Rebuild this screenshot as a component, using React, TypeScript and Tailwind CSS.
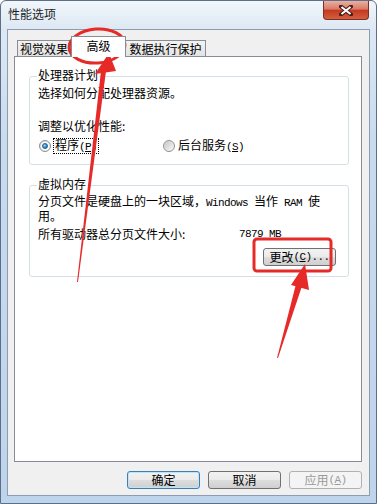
import React from "react";

// latin runs in SimSun are half-width: 11px mono with tight tracking gives the same 6px advance
function Latin({ children }: { children: React.ReactNode }) {
  return (
    <span className="font-['Liberation_Mono',monospace] text-[11px] tracking-[-0.6px]">{children}</span>
  );
}

function Radio({ checked }: { checked?: boolean }) {
  return (
    <span className="flex h-[12px] w-[12px] shrink-0 items-center justify-center rounded-full border border-[#8e8f8f] bg-[linear-gradient(135deg,#d4d4d4,#f8f8f8)]">
      {checked ? (
        <span className="flex h-[8px] w-[8px] items-center justify-center rounded-full bg-white">
          <span className="h-[6px] w-[6px] rounded-full border border-[#1b5a8c] bg-[radial-gradient(circle_at_35%_35%,#9cdcf9,#2b86c6_60%,#135a95)]" />
        </span>
      ) : (
        <span className="h-[8px] w-[8px] rounded-full bg-[linear-gradient(135deg,#c9c9c9,#f4f4f4)]" />
      )}
    </span>
  );
}

function Btn({
  children,
  kind = "normal",
  className = "",
}: {
  children: React.ReactNode;
  kind?: "normal" | "default" | "disabled";
  className?: string;
}) {
  const look =
    kind === "disabled"
      ? "border-[#adb2b5] bg-[#f4f4f4] text-[#9a9a9a]"
      : kind === "default"
        ? "border-[#3c7fb1] bg-[linear-gradient(to_bottom,#f2f2f2,#ebebeb_48%,#dddddd_52%,#cfcfcf)] shadow-[inset_0_0_0_1px_#bfe3f7]"
        : "border-[#707070] bg-[linear-gradient(to_bottom,#f2f2f2,#ebebeb_48%,#dddddd_52%,#cfcfcf)]";
  return (
    <div
      className={`flex h-[18px] items-center justify-center rounded-[3px] border leading-[12px] ${look} ${className}`}
    >
      {children}
    </div>
  );
}

export default function App() {
  return (
    <div className="relative h-[504px] w-[377px] overflow-hidden bg-white font-['Noto_Sans_CJK_SC','Liberation_Sans',sans-serif] text-[12px] leading-[12px] text-black">
      {/* window frame */}
      <div className="h-full w-full rounded-t-[6px] border border-[#5d6f86] bg-[linear-gradient(to_bottom,#f1f6fb_0px,#dde8f4_28px,#c8dbef_140px,#bed4ec_100%)]">
        {/* title bar */}
        <div className="flex h-[28px] items-start justify-between pl-[7px] pr-[7px]">
          <div className="mt-[7px] text-[#1e1e1e]">性能选项</div>
          <div className="flex h-[19px] w-[46px] items-center justify-center rounded-b-[4px] border border-t-0 border-[#7a3022] bg-[linear-gradient(to_bottom,#eab0a3,#d97a66_45%,#c4391f_52%,#d4603f_100%)]">
            <svg width="14" height="11" viewBox="0 0 14 11">
              <path d="M2 1.5 L12 9.5 M12 1.5 L2 9.5" stroke="#4a1f18" strokeWidth="4" strokeLinecap="square" />
              <path d="M2.5 2 L11.5 9 M11.5 2 L2.5 9" stroke="#ffffff" strokeWidth="2" />
            </svg>
          </div>
        </div>

        {/* client area */}
        <div className="mx-[6px] h-[467px] border border-[#8d9cb0] bg-[#f0f0f0] px-[6px] pt-[6px]">
          {/* tabs */}
          <div className="flex h-[20px] items-end pl-[3px]">
            <div className="flex h-[16px] w-[54px] items-center justify-center border border-b-0 border-[#898c95] bg-[linear-gradient(to_bottom,#f3f3f3,#e3e3e3)]">
              视觉效果
            </div>
            <div className="relative z-10 -mb-px flex h-[21px] w-[55px] items-center justify-center border border-b-0 border-[#898c95] bg-white pb-[2px]">
              高级
            </div>
            <div className="flex h-[16px] w-[80px] items-center justify-center border border-b-0 border-l-0 border-[#898c95] bg-[linear-gradient(to_bottom,#f3f3f3,#e3e3e3)]">
              数据执行保护
            </div>
          </div>

          {/* tab panel */}
          <div className="h-[406px] w-[348px] border border-[#898c95] bg-white px-[14px] pt-[12px]">
            <fieldset className="w-[320px] rounded-[3px] border border-[#d5dfe5] pl-[8px] pr-[12px] pb-[12px]">
              <legend className="-ml-px h-[14px] px-px leading-[12px]">处理器计划</legend>
              <div className="mt-[4px]">选择如何分配处理器资源。</div>
              <div className="mt-[21px]">调整以优化性能:</div>
              <div className="mt-[8px] flex h-[12px] items-center">
                <div className="flex w-[124px] items-center pl-px">
                  <Radio checked />
                  <span className="ml-[3px] px-px outline outline-1 outline-dotted outline-black">
                    程序<Latin>(<span className="underline">P</span>)</Latin>
                  </span>
                </div>
                <div className="flex items-center pl-px">
                  <Radio />
                  <span className="ml-[3px]">
                    后台服务<Latin>(<span className="underline">S</span>)</Latin>
                  </span>
                </div>
              </div>
            </fieldset>

            <fieldset className="mt-[13px] w-[320px] rounded-[3px] border border-[#d5dfe5] pl-[8px] pr-[12px] pb-[10px]">
              <legend className="-ml-px h-[14px] px-px leading-[12px]">虚拟内存</legend>
              <div className="mt-[3px] whitespace-nowrap leading-[12.5px]">
                分页文件是硬盘上的一块区域，<Latin>Windows </Latin>当作<Latin> RAM </Latin>使
                <br />
                用。
              </div>
              <div className="mt-[6px] flex">
                <span className="w-[201px]">所有驱动器总分页文件大小:</span>
                <Latin>7879 MB</Latin>
              </div>
              <div className="mt-[8px] flex justify-end">
                <Btn className="w-[73px]">
                  更改<Latin>(<span className="underline">C</span>)...</Latin>
                </Btn>
              </div>
            </fieldset>
          </div>

          {/* dialog buttons */}
          <div className="mt-[9px] flex w-[348px] justify-end gap-[8px]">
            <Btn kind="default" className="w-[73px]">确定</Btn>
            <Btn className="w-[73px]">取消</Btn>
            <Btn kind="disabled" className="w-[73px]">
              应用<Latin>(<span className="underline">A</span>)</Latin>
            </Btn>
          </div>
        </div>
      </div>

      {/* red annotations drawn over the screenshot */}
      <svg className="pointer-events-none absolute inset-0" width="377" height="504" viewBox="0 0 377 504">
        <ellipse cx="97" cy="46" rx="28" ry="17" fill="none" stroke="#e62a28" strokeWidth="3" transform="rotate(-4 97 46)" />
        <polygon points="77,282 101,71 106,71 78,282" fill="#e62a28" />
        <polygon points="95,74 109,53 116,71" fill="#e62a28" />
        <rect x="254" y="239" width="77" height="32" rx="3" fill="none" stroke="#e62a28" strokeWidth="3" />
        <polygon points="277,358 296,284 302,286 278,358" fill="#e62a28" />
        <polygon points="291,285 305,264 309,290" fill="#e62a28" />
      </svg>
    </div>
  );
}
